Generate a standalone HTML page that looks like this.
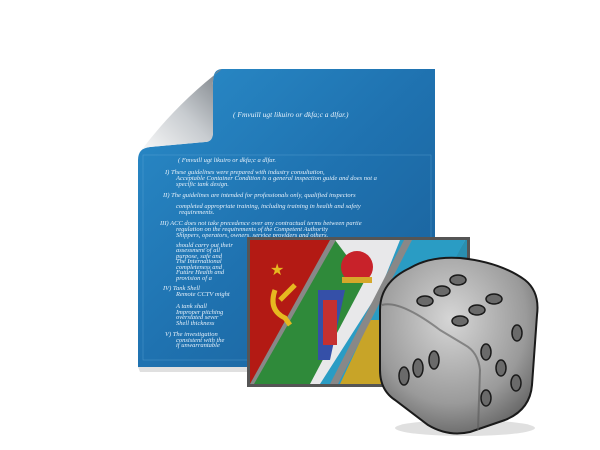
<!DOCTYPE html>
<html><head><style>
html,body{margin:0;padding:0;background:#fff;width:600px;height:450px;overflow:hidden}
svg{display:block}
text{font-family:"Liberation Serif",serif;font-style:italic;fill:#e6f1fb}
</style></head><body>
<svg width="600" height="450" viewBox="0 0 600 450">
<defs>
<linearGradient id="doc" x1="0" y1="0" x2="1" y2="1">
<stop offset="0" stop-color="#2a8cc9"/><stop offset="0.5" stop-color="#1f72b0"/><stop offset="1" stop-color="#1a5f98"/>
</linearGradient>
<linearGradient id="curl" x1="0" y1="1" x2="1" y2="0">
<stop offset="0" stop-color="#fafafa"/><stop offset="0.5" stop-color="#c8ccd0"/><stop offset="1" stop-color="#7a8086"/>
</linearGradient>
<radialGradient id="die" cx="0.45" cy="0.35" r="0.8">
<stop offset="0" stop-color="#d6d6d6"/><stop offset="0.6" stop-color="#9a9a9a"/><stop offset="1" stop-color="#4a4a4a"/>
</radialGradient>
</defs>
<!-- document -->
<path d="M222 69 L435 69 L435 367 L138 367 L138 160 Q138 148 150 147 L205 142 Q213 142 213 132 L213 82 Q213 69 222 69 Z" fill="url(#doc)"/>
<path d="M138 367 L435 367 L435 372 L140 372 Z" fill="#000" opacity="0.12"/>
<!-- curl -->
<path d="M222 69 Q212 72 213 85 L213 132 Q213 142 205 142 L150 147 Q142 148 140 152 Q175 105 222 69 Z" fill="url(#curl)"/>
<rect x="143" y="155" width="288" height="205" fill="none" stroke="#6fb1de" stroke-width="0.6" opacity="0.5"/>
<g font-size="6.5">
<text x="233" y="117" font-size="7.5">( Fmvuill ugt likuiro or dkfa;c a dlfar.)</text>
<text x="178" y="162">( Fmvuill ugt likuiro or dkfa;c a dlfar.</text>
<text x="165" y="174">I)  These guidelines were prepared with industry consultation,</text>
<text x="176" y="180">Acceptable Container Condition is a general inspection guide and does not a</text>
<text x="176" y="186">specific tank design.</text>
<text x="163" y="197">II)  The guidelines are intended for professionals only, qualified inspectors</text>
<text x="176" y="208">completed appropriate training, including training in health and safety</text>
<text x="179" y="214">requirements.</text>
<text x="160" y="225">III)  ACC does not take precedence over any contractual terms between partie</text>
<text x="176" y="231">regulation on the requirements of the Competent Authority</text>
<text x="176" y="237">Shippers, operators, owners, service providers and others.</text>
<text x="176" y="247">should carry out their</text>
<text x="176" y="252">assessment of all</text>
<text x="176" y="258">purpose, safe and</text>
<text x="176" y="263">The International</text>
<text x="176" y="269">completeness and</text>
<text x="176" y="274">Future Health and</text>
<text x="176" y="280">provision of a</text>
<text x="163" y="290">IV)  Tank Shell</text>
<text x="176" y="296">Remote CCTV might</text>
<text x="176" y="308">A tank shall</text>
<text x="176" y="314">Improper pitching</text>
<text x="176" y="319">overstated sever</text>
<text x="176" y="325">Shell thickness</text>
<text x="165" y="336">V)  The investigation</text>
<text x="176" y="342">consistent with the</text>
<text x="176" y="347">if unwarrantable</text>
</g>
<!-- flag card -->
<rect x="247" y="237" width="223" height="150" fill="#555"/>
<g>
<clipPath id="fc"><rect x="250" y="240" width="217" height="144"/></clipPath>
<g clip-path="url(#fc)">
<rect x="250" y="240" width="217" height="144" fill="#2a8fb0"/>
<polygon points="250,240 465,240 385,384 250,384" fill="#e8e8ea"/>
<polygon points="250,240 335,240 251,384 250,384" fill="#b31a14"/>
<polygon points="335,240 250,384 310,384 365,280" fill="#2f8a3a"/>
<polygon points="318,290 345,290 330,360 318,360" fill="#3550a8"/>
<rect x="323" y="300" width="14" height="45" fill="#c63030"/>
<polygon points="400,240 465,240 390,384 320,384 380,290" fill="#2a9cc4"/>
<polygon points="370,320 420,320 395,384 340,384" fill="#c8a428"/>
<circle cx="357" cy="267" r="16" fill="#c8222a"/>
<rect x="342" y="277" width="30" height="6" fill="#d6a82a"/>
<polygon points="404,240 412,240 338,384 330,384" fill="#888"/>
<polygon points="330,240 336,240 254,384 250,384" fill="#888"/>
<text x="270" y="275" font-size="16" style="fill:#e6b820;font-style:normal">★</text>
<path d="M275 290 Q268 310 285 318 L290 325 M280 300 L295 285" stroke="#e6b820" stroke-width="5" fill="none"/>
</g>
</g>
<!-- dice -->
<ellipse cx="465" cy="428" rx="70" ry="8" fill="#000" opacity="0.12"/>
<path d="M410 268 Q430 256 460 258 Q500 262 525 280 Q540 292 537 315 L532 385 Q530 410 505 420 L470 432 Q448 437 428 425 L395 400 Q380 390 380 370 L380 310 Q380 282 410 268 Z" fill="url(#die)" stroke="#1a1a1a" stroke-width="2"/>
<path d="M382 305 Q400 300 440 330 L465 345 Q478 352 480 370 L478 430" stroke="#5a5a5a" stroke-width="2" fill="none" opacity="0.6"/>
<g fill="#6a6a6a" stroke="#1a1a1a" stroke-width="1.5">
<ellipse cx="458" cy="280" rx="8" ry="5"/>
<ellipse cx="442" cy="291" rx="8" ry="5"/>
<ellipse cx="425" cy="301" rx="8" ry="5"/>
<ellipse cx="494" cy="299" rx="8" ry="5"/>
<ellipse cx="477" cy="310" rx="8" ry="5"/>
<ellipse cx="460" cy="321" rx="8" ry="5"/>
<ellipse cx="404" cy="376" rx="5" ry="9"/>
<ellipse cx="418" cy="368" rx="5" ry="9"/>
<ellipse cx="434" cy="360" rx="5" ry="9"/>
<ellipse cx="517" cy="333" rx="5" ry="8"/>
<ellipse cx="486" cy="352" rx="5" ry="8"/>
<ellipse cx="501" cy="368" rx="5" ry="8"/>
<ellipse cx="516" cy="383" rx="5" ry="8"/>
<ellipse cx="486" cy="398" rx="5" ry="8"/>
</g>
</svg>
</body></html>
